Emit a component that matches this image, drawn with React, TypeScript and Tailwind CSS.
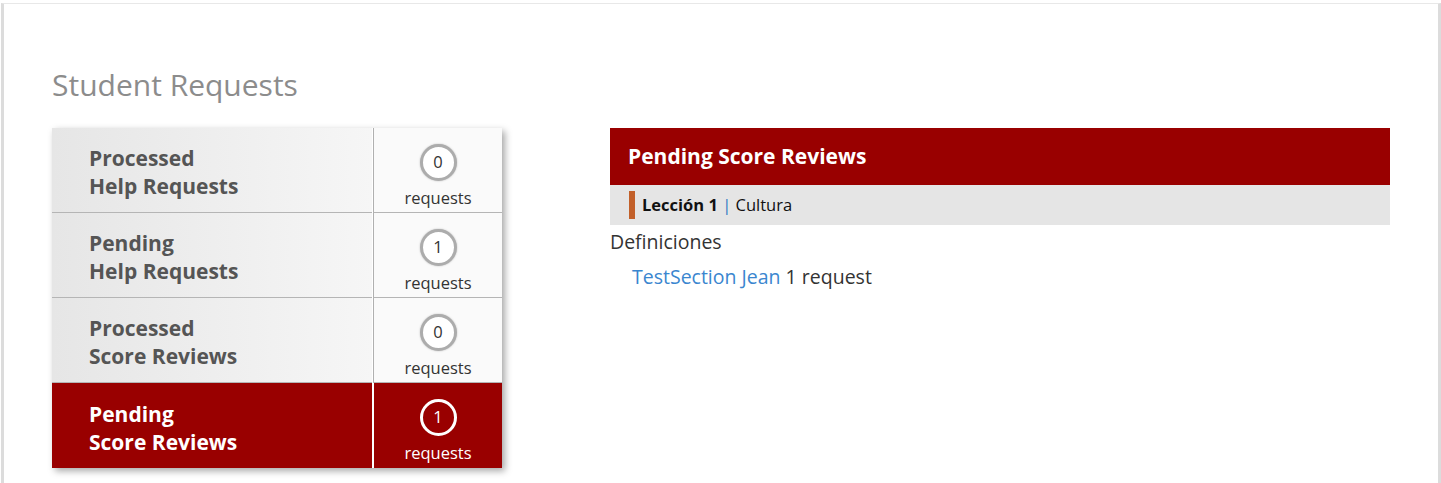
const font = { fontFamily: '"Open Sans", "Liberation Sans", sans-serif' };

type Row = { top: string; bottom: string; count: number; active?: boolean };

const rows: Row[] = [
  { top: "Processed", bottom: "Help Requests", count: 0 },
  { top: "Pending", bottom: "Help Requests", count: 1 },
  { top: "Processed", bottom: "Score Reviews", count: 0 },
  { top: "Pending", bottom: "Score Reviews", count: 1, active: true },
];

function RequestRow({ row, last }: { row: Row; last: boolean }) {
  const active = row.active;
  return (
    <div className="flex h-[85px]">
      <div
        className={
          active
            ? "w-[320px] flex items-center pl-[37px] pt-[4px] bg-[#990000] text-white"
            : "w-[320px] flex items-center pl-[37px] pt-[4px] bg-gradient-to-r from-[#e6e6e6] to-[#f6f6f6] text-[#555555] " +
              (last ? "" : "border-b border-[#b5b5b5]")
        }
      >
        <div className="text-[21px] leading-[28px] font-bold">
          {row.top}
          <br />
          {row.bottom}
        </div>
      </div>
      <div
        className={
          active
            ? "ml-px w-[129px] flex flex-col items-center bg-[#990000] border-l border-white text-white"
            : "ml-px w-[129px] flex flex-col items-center bg-[#fafafa] border-l border-[#b0b0b0] text-[#333333] " +
              (last ? "" : "border-b border-b-[#b5b5b5]")
        }
      >
        <div
          className={
            active
              ? "mt-[16px] w-[37px] h-[37px] rounded-full border-[3px] border-white flex items-center justify-center text-[16.5px]"
              : "mt-[16px] w-[37px] h-[37px] rounded-full border-[3px] border-[#acacac] bg-white shadow-[0_0_2px_rgba(0,0,0,0.25)] flex items-center justify-center text-[16.5px]"
          }
        >
          {row.count}
        </div>
        <div className="mt-[6px] text-[16.5px] leading-[22px]">requests</div>
      </div>
    </div>
  );
}

export default function App() {
  return (
    <div className="bg-white pt-[3px] pl-px h-[483px] overflow-hidden" style={font}>
      <div className="h-[600px] border-t border-t-[#e8e8e8] border-x-[3px] border-x-[#dcdcdc] bg-white">
        <div className="pl-[48px] pt-[61px]">
          <h1 className="text-[30px] leading-[40px] text-[#8c8c8c] font-normal">Student Requests</h1>

          <div className="mt-[23px] flex items-start">
            {/* left tabs */}
            <div className="w-[450px] shadow-[3px_3px_7px_rgba(0,0,0,0.35)] bg-white">
              {rows.map((row, i) => (
                <RequestRow key={i} row={row} last={i === rows.length - 1} />
              ))}
            </div>

            {/* right panel */}
            <div className="ml-[108px] w-[780px]">
              <div className="h-[57px] bg-[#990000] flex items-center pl-[18px]">
                <h2 className="text-[21px] font-bold text-white">Pending Score Reviews</h2>
              </div>
              <div className="h-[40px] bg-[#e5e5e5] flex items-center pl-[19px]">
                <span className="w-[6px] h-[28px] bg-[#c2602a] mr-[7px]"></span>
                <span className="text-[16.5px] text-[#111111]">
                  <span className="font-bold">Lección 1</span>
                  <span className="text-[#2a78c2]"> | </span>
                  Cultura
                </span>
              </div>
              <div className="mt-[4px] text-[19.5px] leading-[26px] text-[#333333]">Definiciones</div>
              <div className="mt-[9px] pl-[22px] text-[19.5px] leading-[26px] text-[#333333]">
                <a className="text-[#3a86cf]" href="#">
                  TestSection Jean
                </a>{" "}
                1 request
              </div>
            </div>
          </div>
        </div>
      </div>
    </div>
  );
}
